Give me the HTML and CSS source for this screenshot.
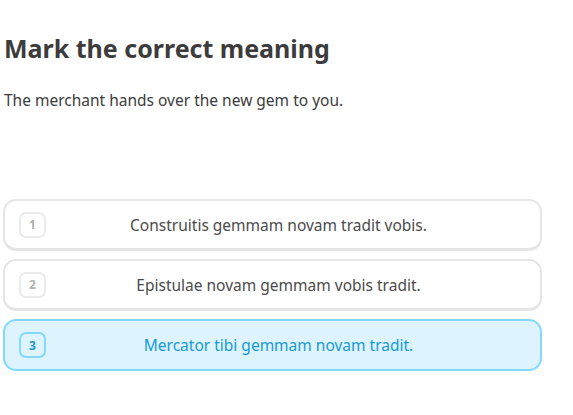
FILE: index.html
```html
<!DOCTYPE html>
<html lang="en">
<head>
<meta charset="utf-8">
<title>Mark the correct meaning</title>
<link rel="stylesheet" href="styles.css">
</head>
<body>
<main class="page">
  <h1 class="title">Mark the correct meaning</h1>
  <p class="prompt">The merchant hands over the new gem to you.</p>
  <div class="options">
    <div class="option">
      <span class="badge">1</span>
      <span class="label">Construitis gemmam novam tradit vobis.</span>
    </div>
    <div class="option">
      <span class="badge">2</span>
      <span class="label">Epistulae novam gemmam vobis tradit.</span>
    </div>
    <div class="option selected">
      <span class="badge">3</span>
      <span class="label">Mercator tibi gemmam novam tradit.</span>
    </div>
  </div>
</main>
</body>
</html>
```

FILE: styles.css
```css
html, body {
  margin: 0;
  padding: 0;
  background: #ffffff;
}
body {
  font-family: "Noto Sans", "DejaVu Sans", sans-serif;
  color: #3c3c3c;
}
.page {
  padding: 30px 31px 0 3px;
}
.title {
  margin: 0 0 0 1px;
  font-size: 25px;
  line-height: 36px;
  font-weight: 700;
  color: #3c3c3c;
}
.prompt {
  margin: 23px 0 0 1px;
  font-size: 15.5px;
  line-height: 22px;
  color: #3c3c3c;
}
.options {
  margin-top: 88px;
  display: flex;
  flex-direction: column;
  gap: 8px;
}
.option {
  display: flex;
  align-items: center;
  height: 52px;
  box-sizing: border-box;
  padding: 0 14px;
  border: 2px solid #e5e5e5;
  border-bottom-width: 3px;
  border-radius: 13px;
  background: #ffffff;
}
.badge {
  flex: none;
  width: 27px;
  height: 26px;
  box-sizing: border-box;
  border: 2px solid #ebebeb;
  border-radius: 7px;
  display: flex;
  align-items: center;
  justify-content: center;
  font-size: 12px;
  font-weight: 700;
  color: #afafaf;
}
.label {
  flex: 1;
  text-align: center;
  margin-right: 15px;
  font-size: 15.5px;
  color: #4b4b4b;
}
.option.selected {
  background: #ddf4ff;
  border-color: #84d8ff;
  border-bottom-width: 2px;
}
.option.selected .badge {
  border-color: #84d8ff;
  color: #1899d6;
}
.option.selected .label {
  color: #1899d6;
}
```
